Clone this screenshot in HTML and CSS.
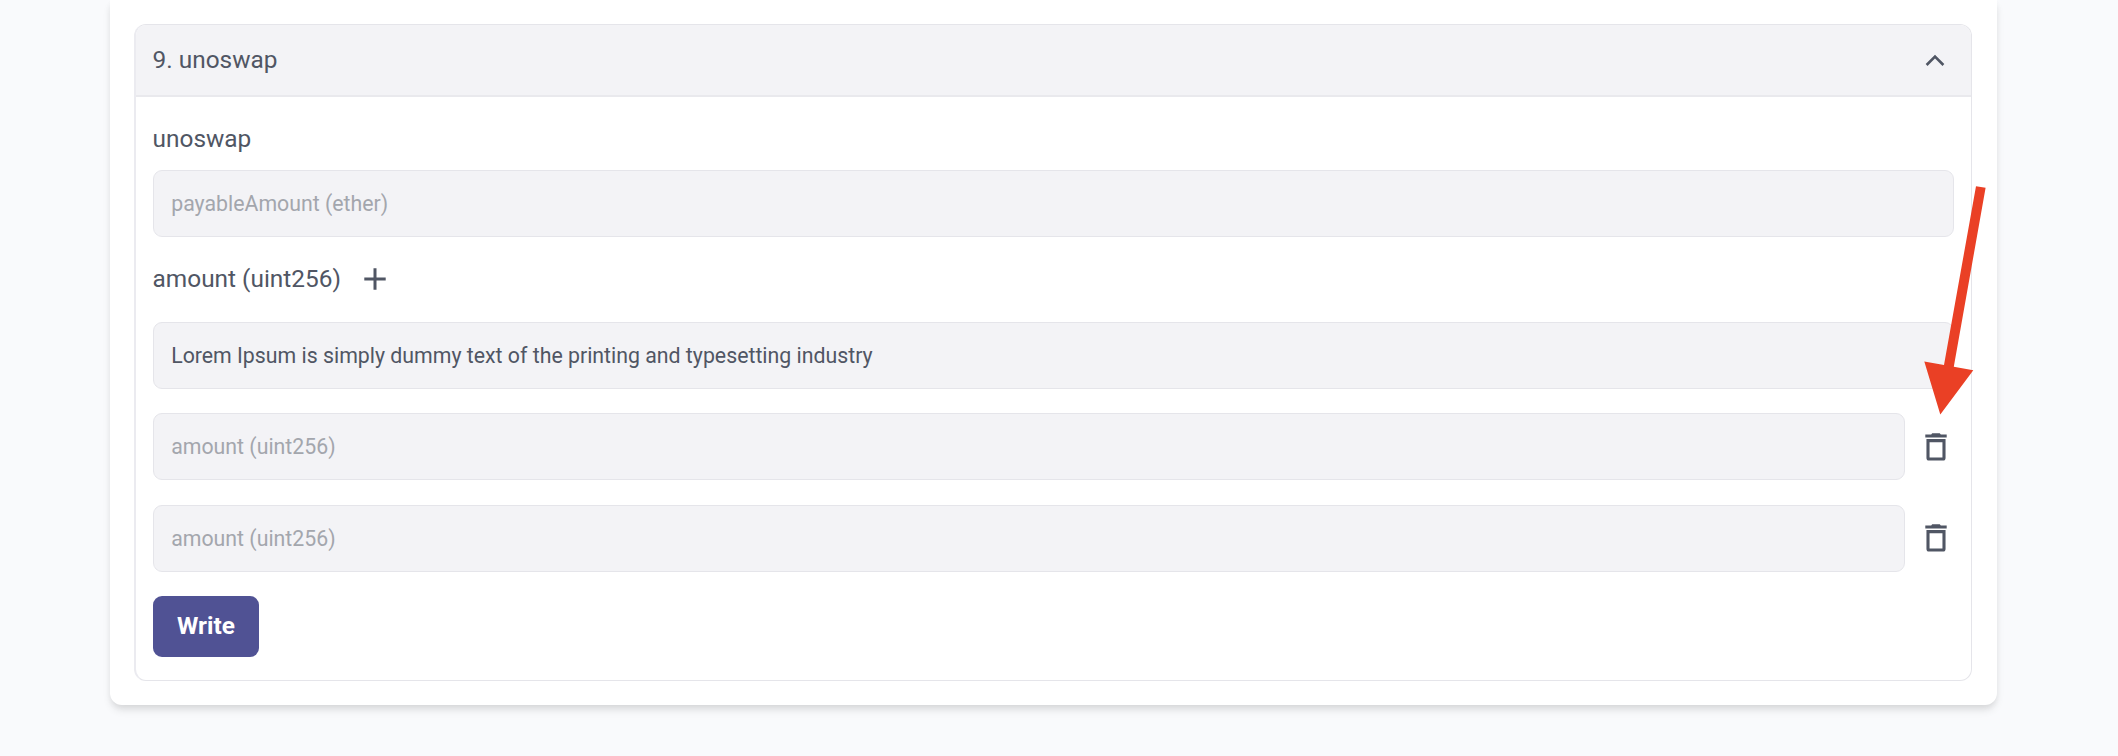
FILE: index.html
```html
<!DOCTYPE html>
<html lang="en">
<head>
<meta charset="utf-8">
<title>Write contract</title>
<link rel="stylesheet" href="styles.css">
</head>
<body>
<main class="card">
  <section class="panel">
    <header class="panel-header">
      <span>9. unoswap</span>
      <svg class="chevron" viewBox="0 0 20 14" fill="none" stroke="currentColor" stroke-width="2.6"><path d="M1.6 12 10 3.6 18.4 12"/></svg>
    </header>
    <form class="panel-body">
      <label class="label">unoswap</label>
      <input class="field" type="text" placeholder="payableAmount (ether)">
      <div class="label label-row">
        <span>amount (uint256)</span>
        <svg class="plus" viewBox="0 0 22 22" fill="none" stroke="currentColor" stroke-width="3"><path d="M11 0.3V21.7M0.3 11H21.7"/></svg>
      </div>
      <div class="rows">
        <input class="field" type="text" value="Lorem Ipsum is simply dummy text of the printing and typesetting industry">
        <div class="row">
          <input class="field" type="text" placeholder="amount (uint256)">
          <svg class="trash" viewBox="0 0 22 28"><path fill="currentColor" d="M0.3 1.6H6.2L7.2 0.3H14.8L15.8 1.6H21.7V4.6H0.3Z"/><path fill="none" stroke="currentColor" stroke-width="3.1" d="M3 7.6H19V25Q19 26 18 26H4Q3 26 3 25Z"/></svg>
        </div>
        <div class="row">
          <input class="field" type="text" placeholder="amount (uint256)">
          <svg class="trash" viewBox="0 0 22 28"><path fill="currentColor" d="M0.3 1.6H6.2L7.2 0.3H14.8L15.8 1.6H21.7V4.6H0.3Z"/><path fill="none" stroke="currentColor" stroke-width="3.1" d="M3 7.6H19V25Q19 26 18 26H4Q3 26 3 25Z"/></svg>
        </div>
      </div>
      <button class="write" type="button">Write</button>
    </form>
  </section>
</main>
<svg class="arrow" viewBox="0 0 52 232"><path fill="#ea4025" d="M54 2.2 63.6 3.8 31.8 182.7 51.3 186.2 18.3 230.5 2.3 177.4 22 181Z"/></svg>
</body>
</html>
```
FILE: styles.css
```css
* { box-sizing: border-box; }
body {
  margin: 0;
  height: 756px;
  overflow: hidden;
  padding: 0 121.5px 0 110px;
  background: #f9fafc;
  color: #505664;
  font-family: Roboto, "Liberation Sans", sans-serif;
  font-size: 24.4px;
}
.card {
  height: 705px;
  padding: 24px 24.5px 24px 24px;
  background: #fff;
  border-radius: 0 0 12px 12px;
  box-shadow: 0 6px 9px -1px rgba(0, 0, 0, .1), 0 3px 6px -1px rgba(0, 0, 0, .06);
}
.panel {
  height: 657px;
  border: 1px solid #e5e5ea;
  border-left: 2px solid #ebebf0;
  border-radius: 12px;
  overflow: hidden;
}
.panel-header {
  display: flex;
  align-items: center;
  justify-content: space-between;
  height: 72px;
  padding: 0 26px 2px 16.6px;
  background: #f3f3f6;
  border-bottom: 2px solid #e9e9ed;
}
.chevron { width: 20px; height: 14px; margin-top: 1px; }
.panel-body {
  display: flex;
  flex-direction: column;
  align-items: flex-start;
  padding: 24px 17px 0 16.6px;
}
.label { height: 36px; line-height: 36px; margin-bottom: 13px; }
.label-row { display: flex; align-items: center; gap: 23px; margin: 24px 0 25px; }
.plus { width: 22px; height: 22px; }
.field {
  width: 100%;
  min-width: 0;
  height: 67px;
  padding: 0 17.6px;
  border: 1px solid #e5e5ea;
  border-radius: 9px;
  background: #f3f3f6;
  color: #505664;
  font: 21.3px Roboto, "Liberation Sans", sans-serif;
}
.field::placeholder { color: #a3a6ad; opacity: 1; }
.rows { display: flex; flex-direction: column; gap: 24.3px; width: 100%; }
.row { display: flex; align-items: center; gap: 19.5px; padding-right: 7.5px; }
.row .field { flex: 1; }
.trash { width: 22px; height: 28px; flex: none; }
.write {
  width: 106.6px;
  height: 61px;
  margin-top: 24px;
  padding: 0 0 1px;
  border: 0;
  border-radius: 9px;
  background: #505294;
  color: #fff;
  font: 700 24.4px Roboto, "Liberation Sans", sans-serif;
}
.arrow {
  position: absolute;
  left: 1922px;
  top: 184px;
  width: 52px;
  height: 232px;
  overflow: visible;
}
```
